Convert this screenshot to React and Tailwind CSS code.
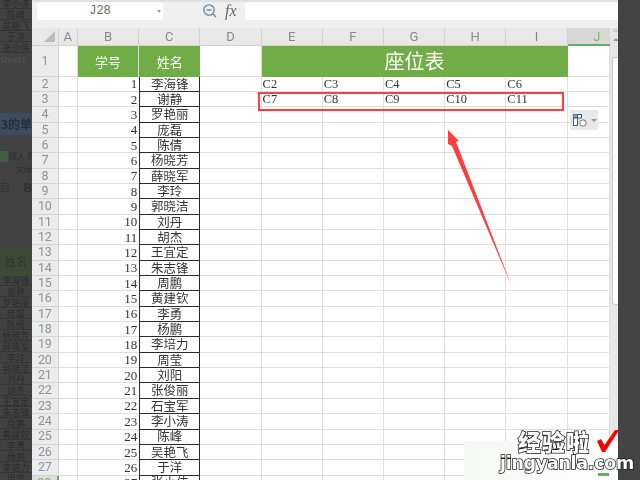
const names = "李海锋 谢静 罗艳丽 庞磊 陈倩 杨晓芳 薛晓军 李玲 郭晓洁 刘丹 胡杰 王宜定 朱志锋 周鹏 黄建钦 李勇 杨鹏 李培力 周莹 刘阳 张俊丽 石宝军 李小涛 陈峰 吴艳飞 于洋 张小伟".split(" ");
const seatRows = [["C2","C3","C4","C5","C6"],["C7","C8","C9","C10","C11"]];
const cols = ["A","B","C","D","E","F","G","H","I"];
const cjk = "font-['Noto_Sans_CJK_SC',sans-serif]";
const mono = "font-['Liberation_Mono',monospace]";
const serif = "font-['Liberation_Serif',serif]";
const hdr = "font-['Roboto',sans-serif]";

function LeftStrip() {
  const line = "h-[11px] flex items-center justify-center text-[9px] leading-none border-b border-[#353535] text-[#2b2b2b] whitespace-nowrap overflow-hidden";
  return (
    <div className={`w-[32px] h-[480px] shrink-0 overflow-hidden bg-[#424242] ${cjk}`}>
      <div className="blur-[0.5px] flex flex-col">
        <div className="-mt-[2px]" />
        {["李小涛","陈峰","吴艳飞","于洋","张小伟"].map(n => <div key={n} className={line}>{n}</div>)}
        <div className="h-[12px] mt-[1px] text-[8px] leading-[12px] text-[#555] whitespace-nowrap overflow-hidden">Sheet1</div>
        <div className="h-[47px]" />
        <div className="h-[22px] bg-[#3b4d5e] flex items-center justify-end text-[12px] font-bold text-[#24303c] whitespace-nowrap overflow-hidden">E3的单</div>
        <div className="h-[15px]" />
        <div className="h-[12px] flex items-center gap-[1px] whitespace-nowrap overflow-hidden">
          <span className="w-[8px] h-[11px] bg-[#3f5f3f] shrink-0" />
          <span className="text-[8px] leading-none text-[#2a2a2a]">插入 页</span>
        </div>
        <div className="h-[12px] mt-[2px] text-right text-[8px] leading-[12px] text-[#2f2f2f]">宋体</div>
        <div className="h-[18px] mt-[2px] flex items-center justify-between text-[10px] leading-none text-[#303030]"><span>自</span><span className={`font-bold text-[13px] ${hdr}`}>B</span></div>
        <div className="h-[52px]" />
        <div className="h-[27px] bg-[#3e4a38] flex items-center justify-center text-[11px] leading-none text-[#2d3429]">姓名</div>
        {names.slice(0, 19).map(n => <div key={n} className={line}>{n}</div>)}
      </div>
    </div>
  );
}

function Toolbar() {
  return (
    <div className="h-[28px] shrink-0 bg-[#efefef] border-t-2 border-[#e0e0e0] flex items-start pl-[5px]">
      <div className={`w-[126px] h-[18px] bg-white rounded-[3px] flex items-center justify-center relative text-[12px] text-[#666] ${mono}`}>
        J28
        <span className="absolute right-[2px] top-[8px] border-x-[2px] border-t-[3px] border-x-transparent border-t-[#999]" />
      </div>
      <svg width="16" height="16" viewBox="0 0 16 16" className="ml-[39px] mt-[1px]" fill="none" stroke="#6b8296" strokeWidth="1.3">
        <circle cx="7" cy="7" r="5.2" />
        <path d="M4.5 7h5M11 11l3 3" />
      </svg>
      <span className="ml-[7px] w-[21px] text-[16px] leading-[18px] italic text-[#666] font-['Liberation_Serif',serif]">fx</span>
      <div className="ml-[-1px] flex-1 h-[18px] bg-white rounded-l-[3px]" />
    </div>
  );
}

function Sheet() {
  const line = "border-r border-b border-[#dedede]";
  const rowHead = `flex items-center justify-center bg-[#ebebeb] border-b border-r border-[#d4d4d4] text-[12.5px] tracking-[-0.4px] leading-none text-[#8b929b] ${hdr}`;
  const colHead = `flex items-center justify-center bg-[#e8e8e8] border-r border-b border-[#d2d2d2] text-[13px] leading-none text-[#8a8a8a] ${hdr}`;
  const green = "bg-[#70ad47] text-white";
  return (
    <div className="w-[577.5px] shrink-0 overflow-hidden grid grid-cols-[26.5px_19.5px_repeat(8,61.2px)_42px] grid-rows-[18px_30.6px] auto-rows-[15.35px]">
      <div className={`${colHead} relative`}>
        <svg width="11" height="11" viewBox="0 0 11 11" className="absolute right-[3px] bottom-[3px]"><path d="M11 0v11H0z" fill="#bdbdbd" /></svg>
      </div>
      {cols.map(c => <div key={c} className={colHead}>{c}</div>)}
      <div className={`flex items-center justify-end pr-[9px] bg-[#d8d8d8] border-b-2 border-[#5fb35f] text-[13px] leading-none text-[#7fb56a] ${hdr}`}>J</div>

      <div className={rowHead}>1</div>
      <div className={line} />
      <div className={`${green} flex items-center justify-center border-r border-[#cfe3c2] text-[13px] ${cjk}`}>学号</div>
      <div className={`${green} flex items-center justify-center text-[13px] ${cjk}`}>姓名</div>
      <div className={line} />
      <div className={`${green} col-span-5 flex items-center justify-center text-[20px] ${cjk}`}>座位表</div>
      <div className={line} />

      {names.map((n, i) => (
        <Row key={n} index={i} name={n} rowHead={rowHead} line={line} />
      ))}
    </div>
  );
}

function Row({ index, name, rowHead, line }) {
  const seats = seatRows[index] || ["", "", "", "", ""];
  const num = index + 2;
  return (
    <>
      {num === 28
        ? <div className={`flex items-center justify-center bg-[#dcdcdc] border-r-2 border-[#5fb35f] text-[12.5px] leading-none text-[#7fb56a] ${hdr}`}>28</div>
        : <div className={rowHead}>{num}</div>}
      <div className={line} />
      <div className={`border-b border-[#dedede] flex items-center justify-end pr-[2px] text-[13px] leading-none text-[#333] ${serif}`}>{index + 1}</div>
      <div className={`border-x border-b border-[#2b2b2b] flex items-center justify-center text-[12.5px] leading-none text-[#333] ${cjk}`}>{name}</div>
      <div className={line} />
      {seats.map((s, k) => (
        <div key={k} className={`${line} flex items-center pl-[1px] text-[12.5px] leading-none text-[#333] ${serif}`}>{s}</div>
      ))}
      <div className={line} />
    </>
  );
}

function ScrollBar() {
  return (
    <div className="w-[8.5px] shrink-0 bg-[#e7e7e7] flex flex-col items-end overflow-hidden">
      <div className="w-full h-[4px] flex items-start"><span className="ml-[3px] mt-[1px] w-[6px] h-[3px] border-y border-[#c4c4c4]" /></div>
      <div className="h-[14px] w-full flex items-center pl-[3px]"><span className="border-x-[3px] border-b-[3px] border-x-transparent border-b-[#999]" /></div>
      <div className="mt-[11px] w-[6px] h-[248px] bg-white border-l border-y border-[#c8c8c8] rounded-l-[3px]" />
    </div>
  );
}

function Overlays() {
  return (
    <>
      <div className="absolute left-[258px] top-[92px] w-[306px] h-[19px] border-2 border-[#ff3d3d]" />
      <svg className="absolute left-0 top-0" width="640" height="480" viewBox="0 0 640 480">
        <path d="M448 130 L459 141 L456 142 L512 287 L452 146 L448 144 Z" fill="#ff3d3d" />
      </svg>
      <div className="absolute left-[570px] top-[110px] w-[28px] h-[20px] bg-[#e8e8e8] flex items-center pl-[3px] gap-[3px]">
        <svg width="15" height="14" viewBox="0 0 15 14" fill="none">
          <rect x="0.5" y="1.5" width="4" height="3.5" fill="#6ea5e8" stroke="#4a7fc4" />
          <rect x="4.5" y="1.5" width="4" height="3.5" fill="#fff" stroke="#555" />
          <rect x="0.5" y="5" width="4" height="7.5" fill="#fff" stroke="#555" />
          <circle cx="10" cy="10" r="3.2" fill="#fff" stroke="#777" />
        </svg>
        <span className="border-x-[3px] border-t-[3px] border-x-transparent border-t-[#999]" />
      </div>
      <div className="absolute left-[464px] top-[441px] w-[154px] h-[39px] bg-gradient-to-r from-[#f6f8f5] to-white" />
      <div className="absolute left-[598px] top-[473px] w-[11px] h-[3px] bg-[#5fb35f]" />
      <div className={`absolute left-[518px] top-[428px] text-[23px] leading-[26px] font-black tracking-[1px] text-white [-webkit-text-stroke:1.5px_#1a1a1a] [paint-order:stroke_fill] whitespace-nowrap ${cjk}`}>经验啦</div>
      <svg className="absolute left-[595px] top-[429px]" width="24" height="24" viewBox="0 0 24 24">
        <path d="M2 12 L6 10 L9.5 16 L20 1 L24 1 L10 23 L7 23 Z" fill="#f40000" />
      </svg>
      <div className="absolute left-[500px] top-[452px] text-[17.5px] leading-[22px] font-bold text-white [-webkit-text-stroke:1.5px_#1a1a1a] [paint-order:stroke_fill] whitespace-nowrap font-['DejaVu_Sans',sans-serif] tracking-[-0.3px]">jingyanla.com</div>
    </>
  );
}

export default function App() {
  return (
    <div className="relative w-[640px] h-[480px] overflow-hidden flex bg-white">
      <LeftStrip />
      <div className="w-[586px] h-[480px] shrink-0 overflow-hidden flex flex-col blur-[0.3px]">
        <Toolbar />
        <div className="flex-1 min-h-0 flex overflow-hidden">
          <Sheet />
          <ScrollBar />
        </div>
      </div>
      <div className="w-[22px] shrink-0 bg-[#444444]" />
      <Overlays />
    </div>
  );
}
